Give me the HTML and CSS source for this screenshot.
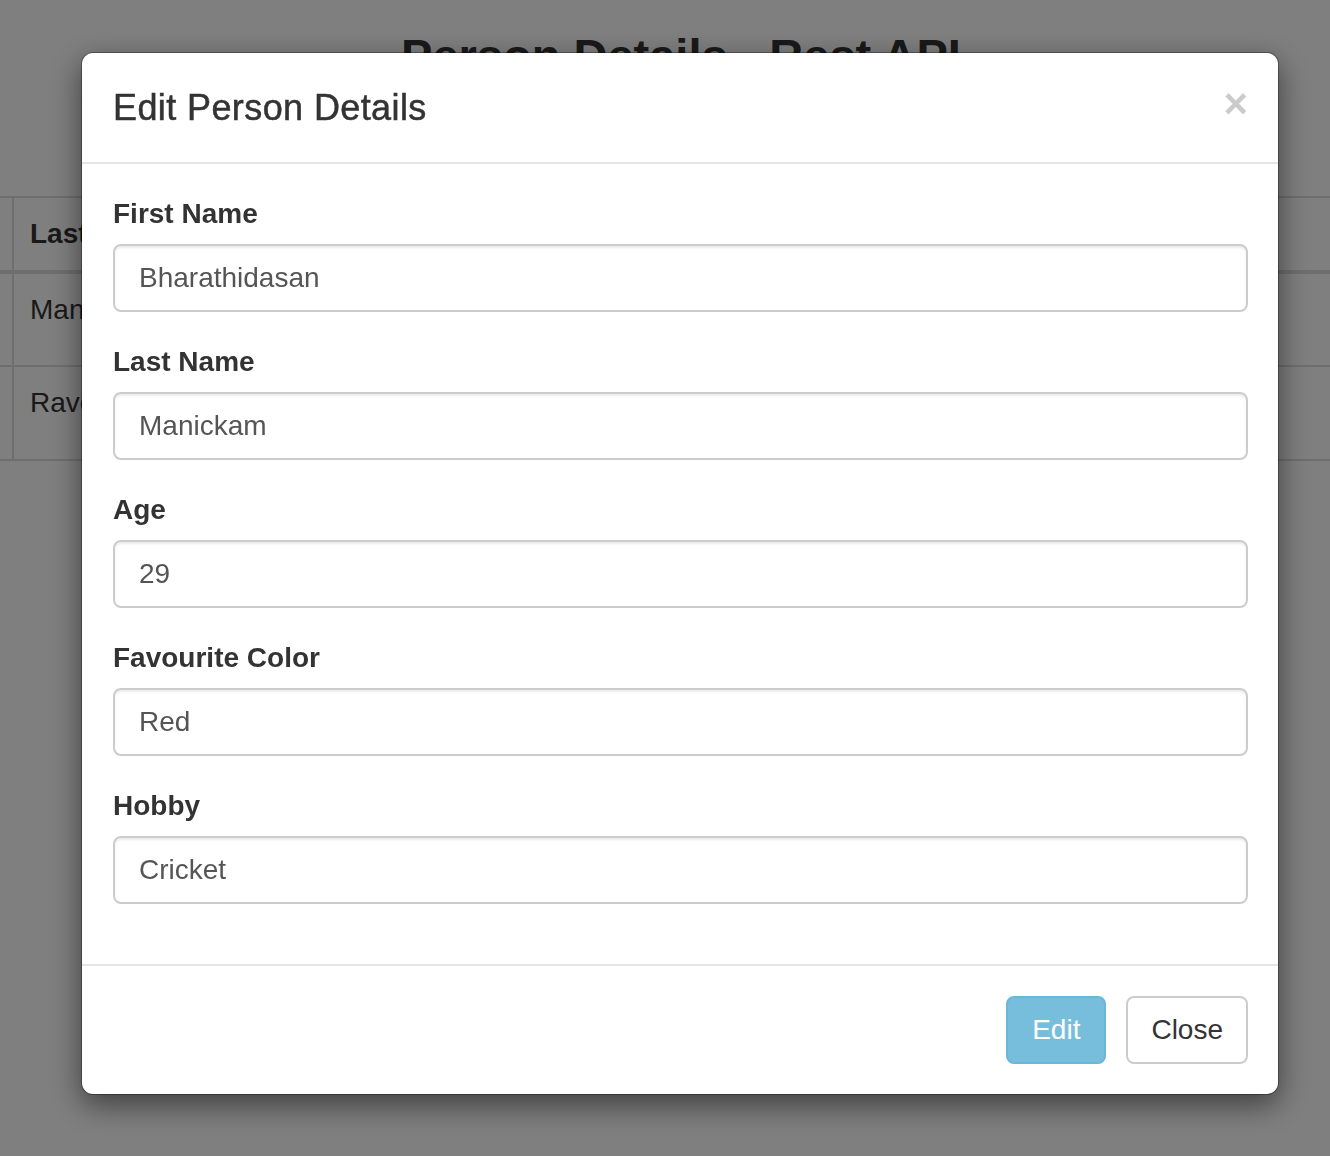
FILE: index.html
```html
<!DOCTYPE html>
<html lang="en">
<head>
<meta charset="utf-8">
<title>Person Details - Rest API</title>
<link rel="stylesheet" href="styles.css">
</head>
<body>
<div class="page">
  <h1 class="page-title">Person Details - Rest API</h1>
  <table class="people">
    <thead>
      <tr><th class="c0"></th><th>Last Name</th><th>Age</th><th>Favourite Color</th><th class="last">Hobby</th></tr>
    </thead>
    <tbody>
      <tr><td class="c0"></td><td>Manickam</td><td>29</td><td>Red</td><td class="last">Cricket</td></tr>
      <tr><td class="c0"></td><td>Raveendran</td><td>31</td><td>Blue</td><td class="last">Chess</td></tr>
    </tbody>
  </table>
</div>

<div class="backdrop"></div>

<div class="modal-layer">
  <div class="modal">
    <div class="modal-header">
      <h4 class="modal-title">Edit Person Details</h4>
      <button class="close" type="button" aria-label="Close">&times;</button>
    </div>
    <div class="modal-body">
      <div class="form-group">
        <label class="field-label">First Name</label>
        <input class="form-control" type="text" value="Bharathidasan">
      </div>
      <div class="form-group">
        <label class="field-label">Last Name</label>
        <input class="form-control" type="text" value="Manickam">
      </div>
      <div class="form-group">
        <label class="field-label">Age</label>
        <input class="form-control" type="text" value="29">
      </div>
      <div class="form-group">
        <label class="field-label">Favourite Color</label>
        <input class="form-control" type="text" value="Red">
      </div>
      <div class="form-group">
        <label class="field-label">Hobby</label>
        <input class="form-control" type="text" value="Cricket">
      </div>
    </div>
    <div class="modal-footer">
      <button class="btn btn-info" type="button">Edit</button>
      <button class="btn btn-default" type="button">Close</button>
    </div>
  </div>
</div>
</body>
</html>
```

FILE: styles.css
```css
* { box-sizing: border-box; }

html, body {
  margin: 0;
  padding: 0;
  height: 100%;
  overflow: hidden;
  background: #fff;
  font-family: "Liberation Sans", Arial, Helvetica, sans-serif;
  color: #333;
  font-size: 28px;
  line-height: 40px;
}

.page {
  padding-top: 30px;
  overflow: hidden;
}

.page-title {
  margin: 0 0 0 32px;
  font-size: 47px;
  line-height: 51px;
  font-weight: bold;
  text-align: center;
  color: #333;
}

.people {
  margin-top: 115px;
  width: 100%;
  border-collapse: collapse;
  table-layout: fixed;
}

.people th,
.people td {
  border: 2px solid #ddd;
  padding: 16px;
  text-align: left;
  vertical-align: top;
  line-height: 40px;
  white-space: nowrap;
  overflow: hidden;
}

.people th {
  border-bottom: 4px solid #ddd;
  font-weight: bold;
}

.people td {
  height: 94px;
}

.people .c0 {
  width: 13px;
  padding: 0;
  border-left: 0;
}

.people .last {
  border-right: 0;
}

.backdrop {
  position: fixed;
  inset: 0;
  background: rgba(0, 0, 0, 0.5);
}

.modal-layer {
  position: fixed;
  top: 52px;
  left: 81px;
  width: 1198px;
}

.modal {
  background: #fff;
  border: 1px solid rgba(0, 0, 0, 0.3);
  border-radius: 12px;
  box-shadow: 0 10px 30px rgba(0, 0, 0, 0.5);
  background-clip: padding-box;
}

.modal-header {
  display: flex;
  justify-content: space-between;
  align-items: flex-start;
  padding: 30px 30px 30px 31px;
  border-bottom: 2px solid #e5e5e5;
}

.modal-title {
  margin: 0;
  font-size: 36px;
  line-height: 49px;
  font-weight: normal;
  letter-spacing: 0.4px;
  -webkit-text-stroke: 0.5px #333;
  color: #333;
}

.close {
  margin-top: 0;
  padding: 0;
  border: 0;
  background: transparent;
  font-family: "Liberation Sans", Arial, sans-serif;
  font-size: 42px;
  font-weight: bold;
  line-height: 42px;
  color: #000;
  opacity: 0.2;
}

.modal-body {
  padding: 30px 30px 30px 31px;
}

.form-group {
  display: flex;
  flex-direction: column;
  margin-bottom: 30px;
}

.field-label {
  margin-bottom: 10px;
  font-weight: bold;
  font-size: 28px;
  line-height: 40px;
  color: #333;
}

.form-control {
  display: block;
  width: 100%;
  height: 68px;
  padding: 12px 24px;
  font-family: inherit;
  font-size: 28px;
  line-height: 40px;
  color: #555;
  background: #fff;
  border: 2px solid #ccc;
  border-radius: 8px;
  box-shadow: inset 0 2px 2px rgba(0, 0, 0, 0.075);
  outline: none;
}

.modal-footer {
  display: flex;
  justify-content: flex-end;
  gap: 20px;
  padding: 30px;
  border-top: 2px solid #e5e5e5;
}

.btn {
  height: 68px;
  padding: 12px 24px;
  font-family: inherit;
  font-size: 28px;
  line-height: 40px;
  border: 2px solid transparent;
  border-radius: 8px;
  cursor: pointer;
}

.btn-info {
  color: #fff;
  background: #77bedc;
  border-color: #6cb7d8;
}

.btn-default {
  color: #333;
  background: #fff;
  border-color: #ccc;
  padding: 12px 23px;
}
```
